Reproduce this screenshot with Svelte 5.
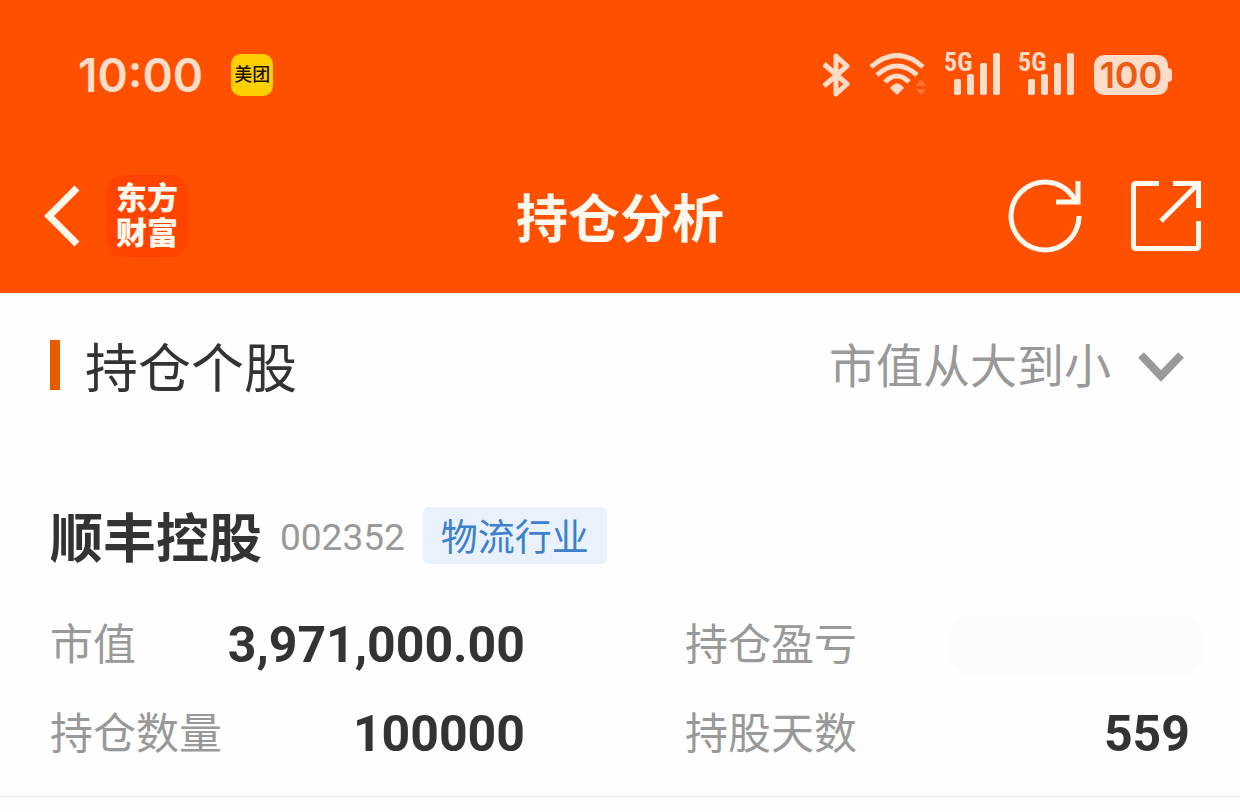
<script>
  let sort = 'desc';

  const sortOptions = [
    { value: 'desc', label: '市值从大到小' },
    { value: 'asc', label: '市值从小到大' }
  ];

  const stock = {
    name: '顺丰控股',
    code: '002352',
    industry: '物流行业',
    metrics: [
      { label: '市值', value: '3,971,000.00' },
      { label: '持仓盈亏', value: '', hidden: true },
      { label: '持仓数量', value: '100000' },
      { label: '持股天数', value: '559' }
    ]
  };

  const sims = [1, 2];
</script>

<div class="page">
  <header>
    <div class="status">
      <span class="time">10:00</span>
      <span class="app-badge">美团</span>

      <div class="system">
        <svg class="bluetooth" width="28" height="44" viewBox="0 0 28 44" aria-hidden="true">
          <path d="M2 11 25 31 14 41V3L25 13 2 33" />
        </svg>
        <svg class="wifi" width="58" height="44" viewBox="0 0 58 44" aria-hidden="true">
          <g class="arcs">
            <path d="M3 14Q29-9 55 14" />
            <path d="M9 22Q29 4 49 22" />
            <path d="M17 29Q29 17 41 29" />
          </g>
          <path class="dot" d="M22 35Q29 26 36 35L30 41Q29 42 28 41Z" />
          <path class="traffic" d="M48 33 53 26 58 33ZM48 36H58L53 42Z" />
        </svg>
        {#each sims as sim (sim)}
          <div class="signal">
            <span>5G</span>
            <svg width="46" height="44" viewBox="0 0 46 44" aria-hidden="true">
              <rect x="0" y="26" width="7" height="16" rx="2" />
              <rect x="13" y="21" width="7" height="21" rx="2" />
              <rect x="26" y="10" width="7" height="32" rx="2" />
              <rect x="39" y="0" width="7" height="42" rx="2" />
            </svg>
          </div>
        {/each}
        <div class="battery">100</div>
      </div>
    </div>

    <nav>
      <div class="side">
        <button class="back" aria-label="返回">
          <svg width="42" height="62" viewBox="0 0 42 62"><path d="M39 3 11 31 39 59" /></svg>
        </button>
        <a class="logo" href="#home">东方<br />财富</a>
      </div>
      <h1>持仓分析</h1>
      <div class="side actions">
        <button aria-label="刷新">
          <svg width="76" height="76" viewBox="0 0 76 76">
            <path d="M71 38A34 34 0 1 1 68 24" />
            <path d="M70 3V24H48" />
          </svg>
        </button>
        <button aria-label="分享">
          <svg width="72" height="72" viewBox="0 0 72 72">
            <path d="M29 3.500H6Q3.500 3.500 3.500 6V66Q3.500 68.500 6 68.500H66Q68.500 68.500 68.500 66V41" />
            <path d="M43 3.500H68.500V28" />
            <path d="M31 41 68 4" />
          </svg>
        </button>
      </div>
    </nav>
  </header>

  <main>
    <div class="section-head">
      <h2>持仓个股</h2>
      <label class="sort">
        <select bind:value={sort} aria-label="排序">
          {#each sortOptions as option}
            <option value={option.value}>{option.label}</option>
          {/each}
        </select>
        <svg width="46" height="32" viewBox="0 0 46 32" aria-hidden="true">
          <path d="M3 4 23 25 43 4" />
        </svg>
      </label>
    </div>

    <section class="stock">
      <div class="title">
        <h3>{stock.name}</h3>
        <span class="code">{stock.code}</span>
        <span class="tag">{stock.industry}</span>
      </div>
      <dl>
        {#each stock.metrics as metric}
          <div class="metric">
            <dt>{metric.label}</dt>
            <dd class:masked={metric.hidden}>{metric.value}</dd>
          </div>
        {/each}
      </dl>
    </section>
  </main>
</div>

<style>
  :global(body) {
    margin: 0;
    background: #fefefe;
  }

  .page {
    font-family: Roboto, 'Noto Sans CJK SC', sans-serif;
    color: #333;
  }

  h1, h2, h3, dl, dd {
    margin: 0;
  }

  h1, h2, h3, .tag {
    font-family: 'Noto Sans CJK SC', sans-serif;
  }

  button {
    padding: 0;
    border: 0;
    background: none;
    cursor: pointer;
  }

  svg {
    display: block;
    fill: none;
  }

  header {
    padding-bottom: 12px;
    background: #ff5000;
    color: #fff8ee;
  }

  .status {
    display: flex;
    align-items: center;
    height: 150px;
    padding: 0 68px 0 78px;
    color: #ffdcc8;
  }

  .time {
    font: 600 46px/56px Inter, sans-serif;
  }

  .app-badge {
    width: 42px;
    margin-left: 28px;
    border-radius: 10px;
    background: #ffd000;
    color: #1c1400;
    font-size: 18px;
    font-weight: 500;
    line-height: 42px;
    text-align: center;
  }

  .system {
    display: flex;
    align-items: center;
    gap: 18px;
    margin-left: auto;
  }

  .bluetooth {
    stroke: currentColor;
    stroke-width: 5;
    stroke-linejoin: round;
  }

  .arcs {
    stroke: currentColor;
    stroke-width: 5;
  }

  .dot {
    fill: currentColor;
  }

  .traffic {
    fill: #ff7433;
  }

  .signal {
    position: relative;
    padding-left: 10px;
  }

  .signal span {
    position: absolute;
    top: -4px;
    left: 0;
    font: 700 26px/26px 'Roboto Condensed', 'Liberation Sans Narrow', Roboto, sans-serif;
  }

  .signal rect {
    fill: currentColor;
  }

  .battery {
    position: relative;
    width: 74px;
    margin: 0 4px 0 2px;
    border-radius: 10px;
    background: #ffdcc8;
    color: #ec5a14;
    font: 600 36px/40px Inter, sans-serif;
    text-align: center;
  }

  .battery::after {
    content: '';
    position: absolute;
    top: 13px;
    right: -4px;
    width: 4px;
    height: 14px;
    border-radius: 0 4px 4px 0;
    background: #ffdcc8;
  }

  nav {
    display: flex;
    align-items: center;
    height: 131px;
    padding: 0 38px;
  }

  nav svg {
    stroke: currentColor;
    stroke-width: 5;
  }

  nav button {
    color: inherit;
  }

  .side {
    display: flex;
    flex: 1;
    align-items: center;
    gap: 26px;
  }

  .back svg {
    stroke-width: 7;
  }

  .logo {
    width: 82px;
    padding: 6px 0;
    border-radius: 18px;
    background: #ff4400;
    color: inherit;
    font-size: 31px;
    font-weight: 900;
    line-height: 35px;
    text-align: center;
    text-decoration: none;
  }

  h1 {
    font-size: 52px;
    font-weight: 700;
    line-height: 72px;
  }

  .actions {
    justify-content: flex-end;
    gap: 46px;
  }

  main {
    border-bottom: 1px solid #e8e8e8;
  }

  .section-head {
    display: flex;
    align-items: center;
    justify-content: space-between;
    padding: 34px 56px 0 50px;
  }

  h2 {
    display: flex;
    align-items: center;
    gap: 25px;
    font-size: 53px;
    font-weight: 400;
    line-height: 76px;
  }

  h2::before {
    content: '';
    width: 10px;
    height: 50px;
    background: #e85a00;
  }

  .sort {
    display: flex;
    align-items: center;
    gap: 27px;
    padding-top: 4px;
    color: #999;
  }

  select {
    appearance: none;
    padding: 0;
    border: 0;
    background: none;
    color: inherit;
    font: inherit;
    font-size: 47px;
    line-height: 72px;
  }

  .sort svg {
    stroke: currentColor;
    stroke-width: 8;
  }

  .stock {
    padding: 94px 50px 18px;
  }

  .title {
    display: flex;
    align-items: center;
    gap: 18px;
    margin-bottom: 27px;
  }

  h3 {
    font-size: 53px;
    font-weight: 700;
    line-height: 76px;
  }

  .code {
    padding-top: 4px;
    color: #999;
    font-size: 37px;
  }

  .tag {
    padding: 0 18px;
    border-radius: 6px;
    background: #e9f2fc;
    color: #3d80cc;
    font-size: 37px;
    line-height: 57px;
  }

  dl {
    display: grid;
    grid-template-columns: 475fr 505fr;
    column-gap: 160px;
  }

  .metric {
    display: flex;
    align-items: center;
    justify-content: space-between;
    height: 89px;
  }

  dt {
    color: #999;
    font-size: 43px;
    line-height: 60px;
  }

  dd {
    font-size: 50px;
    font-weight: 700;
    line-height: 60px;
  }

  .masked {
    width: 256px;
    height: 60px;
    margin-right: -14px;
    border-radius: 24px;
    background: #fcfcfc;
  }
</style>
